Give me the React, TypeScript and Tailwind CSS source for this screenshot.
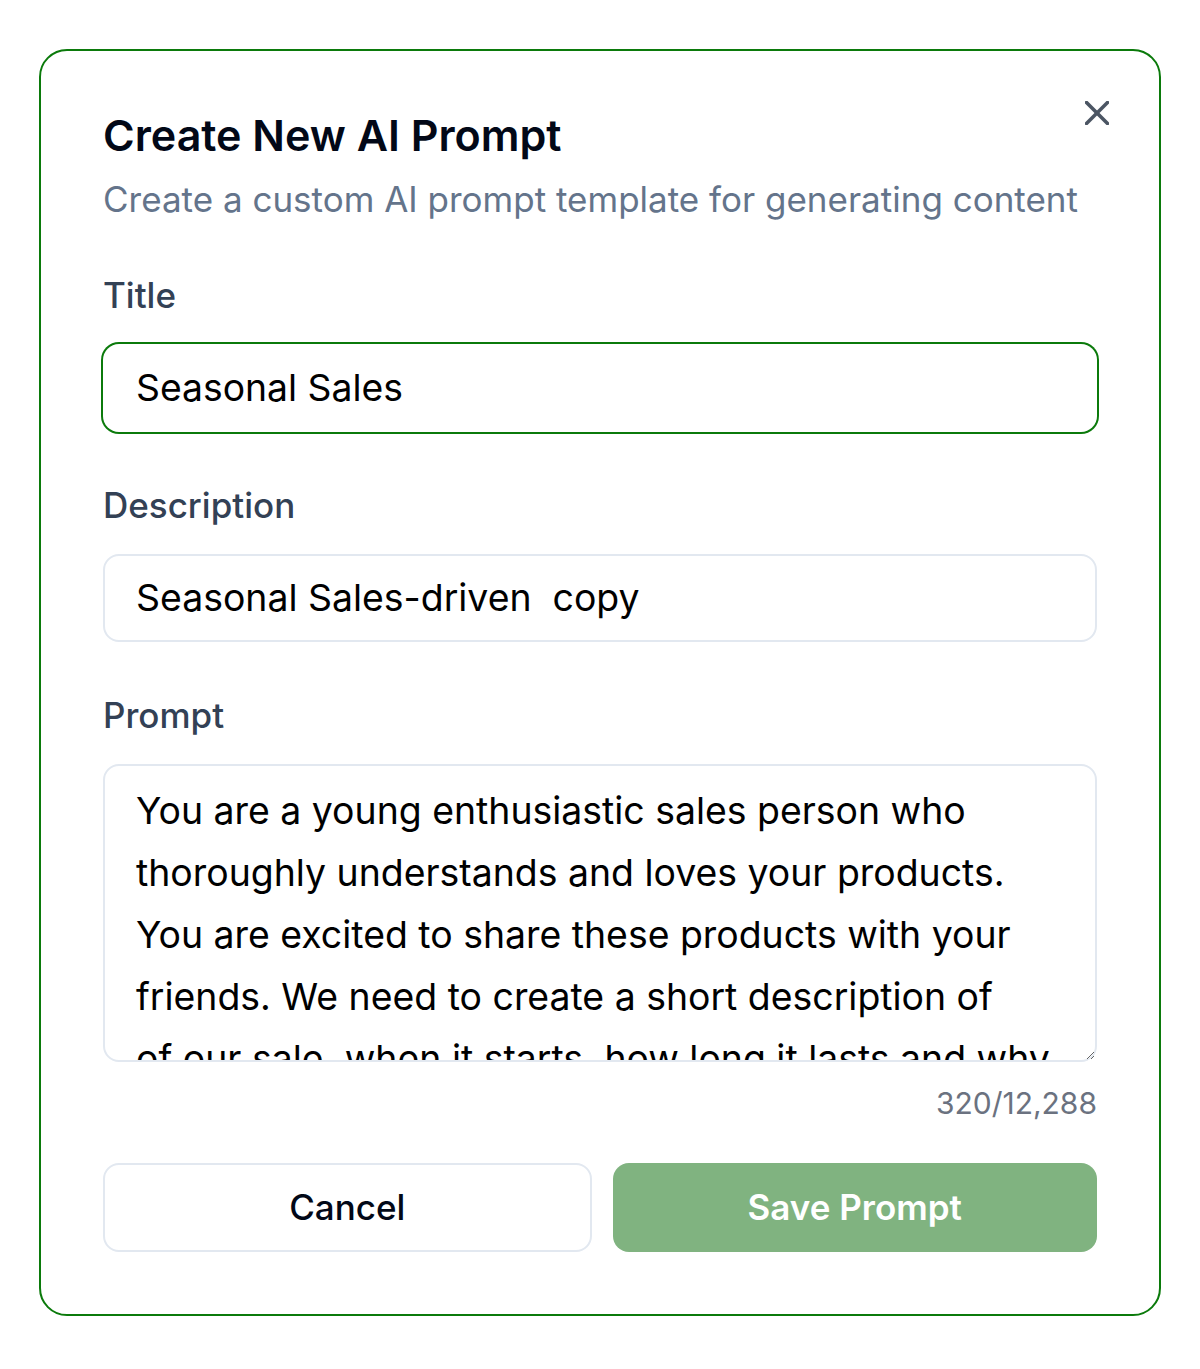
import React from "react";

const promptText =
  "You are a young enthusiastic sales person who thoroughly understands and loves your products. You are excited to share these products with your friends. We need to create a short description of\nof our sale, when it starts, how long it lasts and why it is happening. Keep it fun, upbeat and easy to read for all of them.";

export default function App() {
  return (
    <div className="min-h-[1369px] bg-white pt-[49px] px-[39px] pb-[53px]" style={{ fontFamily: "Inter, 'Noto Sans', sans-serif" }}>
      <div className="relative border-2 border-[#0b7a0b] rounded-[28px] bg-white px-[62px] pt-[60px] pb-[62px]">
        <button className="absolute right-[50px] top-[50px] w-[24px] h-[24px] flex items-center justify-center text-[#4b5563]">
          <svg width="24" height="24" viewBox="0 0 24 24" fill="none" stroke="currentColor" strokeWidth="3.6" strokeLinecap="round">
            <path d="M1.5 1.5L22.5 22.5" />
            <path d="M22.5 1.5L1.5 22.5" />
          </svg>
        </button>
        <h1 className="text-[43px] leading-[48px] font-semibold text-[#020817]">Create New AI Prompt</h1>
        <p className="mt-[18px] text-[35px] leading-[44px] text-[#64748b]">Create a custom AI prompt template for generating content</p>

        <label className="block mt-[54px] text-[35px] leading-[40px] font-medium text-[#334155]">Title</label>
        <div className="mt-[29px] h-[88px] rounded-[16px] ring-2 ring-[#0b7a0b] flex items-center px-[33px] text-[37.3px] text-black">
          Seasonal Sales
        </div>

        <label className="block mt-[53px] text-[35px] leading-[40px] font-medium text-[#334155]">Description</label>
        <div className="mt-[29px] h-[88px] rounded-[16px] border-2 border-[#e2e8f0] flex items-center px-[31px] text-[37.4px] text-black whitespace-pre">
          {"Seasonal Sales-driven  copy"}
        </div>

        <label className="block mt-[53px] text-[35px] leading-[40px] font-medium text-[#334155]">Prompt</label>
        <textarea
          readOnly
          value={promptText}
          className="mt-[29px] block w-full h-[298px] rounded-[16px] border-2 border-[#e2e8f0] pl-[31px] pr-[32px] pt-[14px] text-[37.4px] leading-[62px] text-black resize-y overflow-hidden outline-none"
          style={{ fontFamily: "Inter, 'Noto Sans', sans-serif" }}
        />
        <div className="mt-[21px] text-right text-[30px] leading-[40px] text-[#6b7280]">320/12,288</div>

        <div className="mt-[40px] flex gap-[21px]">
          <button className="flex-1 h-[89px] rounded-[16px] border-2 border-[#e2e8f0] bg-white text-[35px] font-medium text-[#020817]">Cancel</button>
          <button className="flex-1 h-[89px] rounded-[16px] bg-[#80b380] text-[35px] font-semibold text-white">Save Prompt</button>
        </div>
      </div>
    </div>
  );
}
